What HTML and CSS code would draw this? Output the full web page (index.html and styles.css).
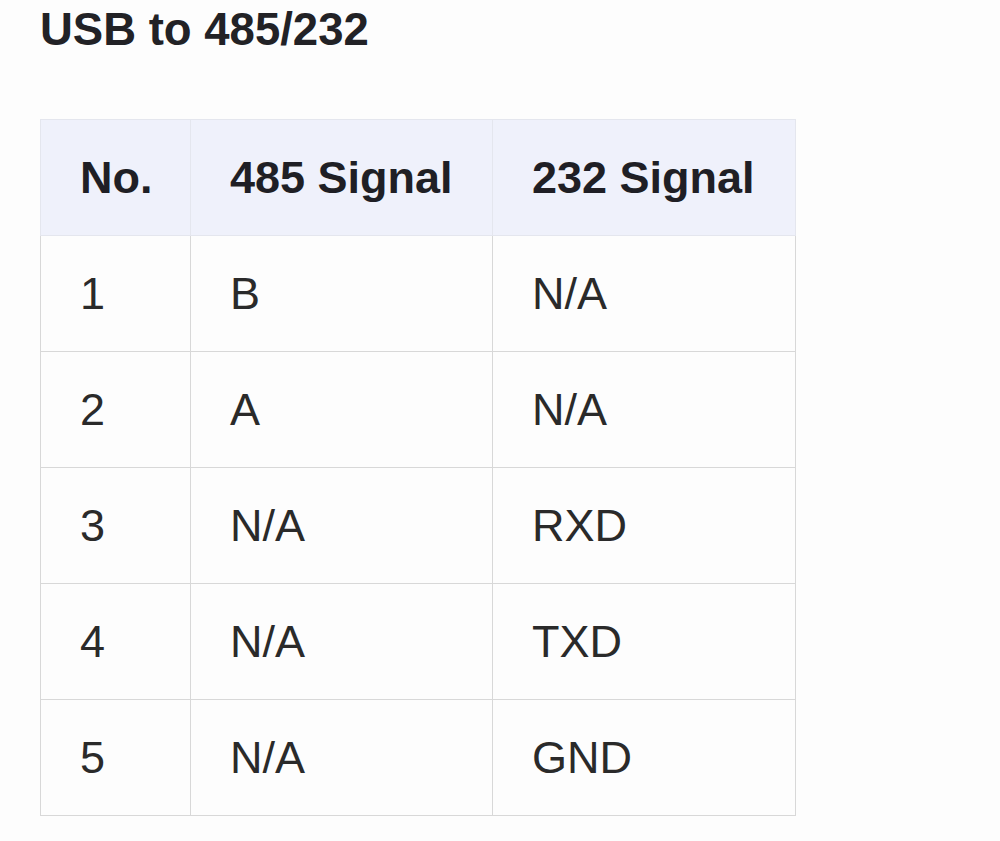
FILE: index.html
```html
<!DOCTYPE html>
<html>
<head>
<meta charset="utf-8">
<link rel="stylesheet" href="styles.css">
</head>
<body>
<h1 class="title">USB to 485/232</h1>
<table class="pins">
  <thead>
    <tr><th class="c1">No.</th><th class="c2">485 Signal</th><th class="c3">232 Signal</th></tr>
  </thead>
  <tbody>
    <tr><td>1</td><td>B</td><td>N/A</td></tr>
    <tr><td>2</td><td>A</td><td>N/A</td></tr>
    <tr><td>3</td><td>N/A</td><td>RXD</td></tr>
    <tr><td>4</td><td>N/A</td><td>TXD</td></tr>
    <tr><td>5</td><td>N/A</td><td>GND</td></tr>
  </tbody>
</table>
</body>
</html>
```
FILE: styles.css
```css
html, body {
  margin: 0;
  padding: 0;
  background: #fdfdfd;
}
body {
  padding: 4px 0 0 40px;
  font-family: "Liberation Sans", Arial, sans-serif;
  color: #1f1f23;
}
.title {
  margin: 0 0 63px 0;
  font-size: 45.5px;
  line-height: 52px;
  font-weight: bold;
  color: #222226;
}
.pins {
  border-collapse: collapse;
  width: 755px;
  table-layout: fixed;
  font-size: 45px;
}
.pins th, .pins td {
  text-align: left;
  padding: 32px 37px 32px 39px;
  line-height: 51px;
  border: 1px solid #d8d8d8;
  white-space: nowrap;
}
.pins th {
  background: #eff1fb;
  font-weight: bold;
  border-color: #e4e6ee;
  color: #1f1f25;
}
.pins td {
  background: #fdfdfd;
  color: #2a2a2a;
}
.c1 { width: 73px; }
.c2 { width: 225px; }
.c3 { width: 226px; }
```
